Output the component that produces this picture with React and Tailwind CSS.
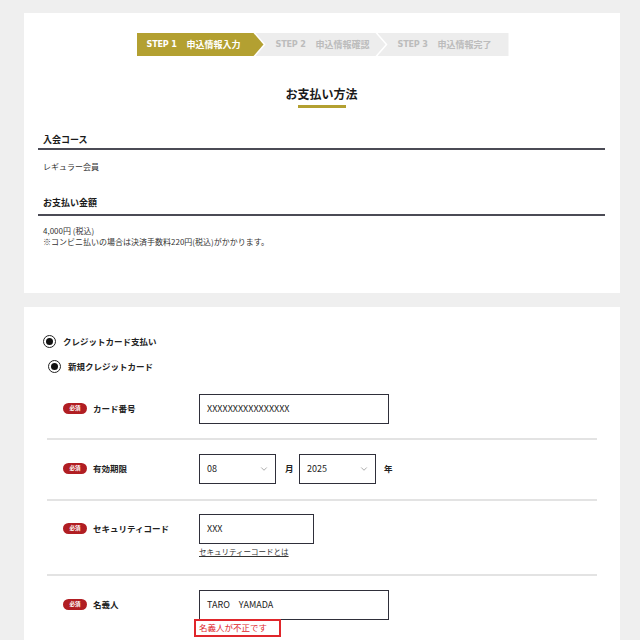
import React from "react";
import { ChevronDown } from "lucide-react";

const jp = "font-['Noto_Sans_CJK_JP','Noto_Sans',sans-serif]";

const steps = [
  { no: "STEP 1", label: "申込情報入力", active: true },
  { no: "STEP 2", label: "申込情報確認" },
  { no: "STEP 3", label: "申込情報完了" },
];

const Stepper = () => (
  <div className="flex justify-center pl-[2px]">
    <div className="flex h-[23px]">
      {steps.map((s, i) => (
        <div
          key={s.no}
          className={
            i === 0
              ? "flex w-[127px] items-center gap-[10px] bg-[#b3a031] pl-[10px] text-white [clip-path:polygon(0_0,calc(100%-10px)_0,100%_50%,calc(100%-10px)_100%,0_100%)]"
              : i === 1
              ? "-ml-[8px] flex w-[130px] items-center gap-[10px] bg-[#ededed] pl-[20px] text-[#bcbcbc] [clip-path:polygon(0_0,calc(100%-10px)_0,100%_50%,calc(100%-10px)_100%,0_100%,10px_50%)]"
              : "-ml-[8px] flex w-[131px] items-center gap-[10px] bg-[#ededed] pl-[20px] text-[#bcbcbc] [clip-path:polygon(0_0,100%_0,100%_100%,0_100%,10px_50%)]"
          }
        >
          <span className="font-['DejaVu_Sans_Condensed','Liberation_Sans_Narrow',sans-serif] text-[9px] font-bold tracking-[-0.2px]">
            {s.no}
          </span>
          <span className="text-[9px] font-bold leading-none">{s.label}</span>
        </div>
      ))}
    </div>
  </div>
);

const Radio = () => (
  <span className="flex h-[13px] w-[13px] items-center justify-center rounded-full border-[1.5px] border-[#222]">
    <span className="h-[7px] w-[7px] rounded-full bg-[#111]" />
  </span>
);

const Badge = () => (
  <span className="inline-flex h-[11px] w-[24px] items-center justify-center rounded-full bg-[#b11e23] text-[5.5px] font-bold leading-none text-white">
    必須
  </span>
);

function Row({ label, children, className = "" }) {
  return (
    <div className={`flex items-start pl-[16px] ${className}`}>
      <div className="flex h-[30px] w-[136px] shrink-0 items-center gap-[6px]">
        <Badge />
        <span className="text-[8.5px] font-bold text-[#222]">{label}</span>
      </div>
      <div>{children}</div>
    </div>
  );
}

const Select = ({ value }) => (
  <div className="flex h-[30px] w-[77px] items-center justify-between border-[1.5px] border-[#2f2f3a] pl-[7px] pr-[6px]">
    <span className="text-[9px] text-[#222]">{value}</span>
    <ChevronDown size={10} strokeWidth={1.5} className="text-[#777]" />
  </div>
);

export default function App() {
  return (
    <div className={`min-h-screen bg-[#efefef] pl-[24px] pr-[20px] pt-[13px] ${jp}`}>
      {/* 上段: 申込内容 */}
      <div className="bg-white pb-[46px] pl-[14px] pr-[15px] pt-[20px]">
        <Stepper />
        <h1 className="mt-[29px] text-center text-[12px] font-bold leading-[18px] text-[#1a1a1a]">お支払い方法</h1>
        <div className="mx-auto mt-[2px] h-[2.5px] w-[48px] bg-[#b3a031]" />

        <div className="mt-[25px] border-b-2 border-[#4b4b55] pb-[1px] pl-[5px]">
          <p className="text-[9px] font-bold leading-[14px] text-[#1a1a1a]">入会コース</p>
        </div>
        <p className="mt-[11px] pl-[5px] text-[8px] leading-[12px] text-[#333]">レギュラー会員</p>

        <div className="mt-[23px] border-b-2 border-[#4b4b55] pb-[4px] pl-[5px]">
          <p className="text-[9px] font-bold leading-[14px] text-[#1a1a1a]">お支払い金額</p>
        </div>
        <div className="mt-[9px] pl-[5px] text-[8px] leading-[11px] text-[#333]">
          <p>4,000円 (税込)</p>
          <p>※コンビニ払いの場合は決済手数料220円(税込)がかかります。</p>
        </div>
      </div>

      {/* 下段: カード情報 */}
      <div className="mt-[14px] bg-white px-[23px] pb-[40px] pt-[28px]">
        <label className="ml-[-4px] flex h-[14px] items-center gap-[7px]">
          <Radio />
          <span className="text-[8.5px] font-bold text-[#222]">クレジットカード支払い</span>
        </label>
        <label className="ml-[1px] mt-[11px] flex h-[14px] items-center gap-[7px]">
          <Radio />
          <span className="text-[8.5px] font-bold text-[#222]">新規クレジットカード</span>
        </label>

        <div className="mt-[20px]">
          <Row label="カード番号" className="border-b-2 border-[#e3e3e3] pb-[14px]">
            <div className="flex h-[30px] w-[190px] items-center border-[1.5px] border-[#2f2f3a] px-[7px] text-[9px] text-[#222]">
              XXXXXXXXXXXXXXXX
            </div>
          </Row>

          <Row label="有効期限" className="border-b-2 border-[#e3e3e3] pb-[15px] pt-[14px]">
            <div className="flex items-center">
              <Select value="08" />
              <span className="ml-[9px] w-[14px] text-[8.5px] font-bold text-[#222]">月</span>
              <Select value="2025" />
              <span className="ml-[8px] text-[8.5px] font-bold text-[#222]">年</span>
            </div>
          </Row>

          <Row label="セキュリティコード" className="border-b-2 border-[#e3e3e3] pb-[17px] pt-[13px]">
            <div className="flex h-[30px] w-[115px] items-center border-[1.5px] border-[#2f2f3a] px-[7px] text-[9px] text-[#222]">
              XXX
            </div>
            <a className="mt-[3px] block text-[7.5px] leading-[10px] text-[#333] underline">セキュリティーコードとは</a>
          </Row>

          <Row label="名義人" className="pt-[14px]">
            <div className="flex h-[30px] w-[190px] items-center border-[1.5px] border-[#2f2f3a] px-[7px] text-[9px] text-[#222]">
              TARO　YAMADA
            </div>
            <div className="-ml-[5px] -mt-[1px] flex h-[18px] w-[87px] items-center border-2 border-[#e0262b] pl-[3px] text-[8.5px] text-[#e0262b]">
              名義人が不正です
            </div>
          </Row>
        </div>
      </div>
    </div>
  );
}
